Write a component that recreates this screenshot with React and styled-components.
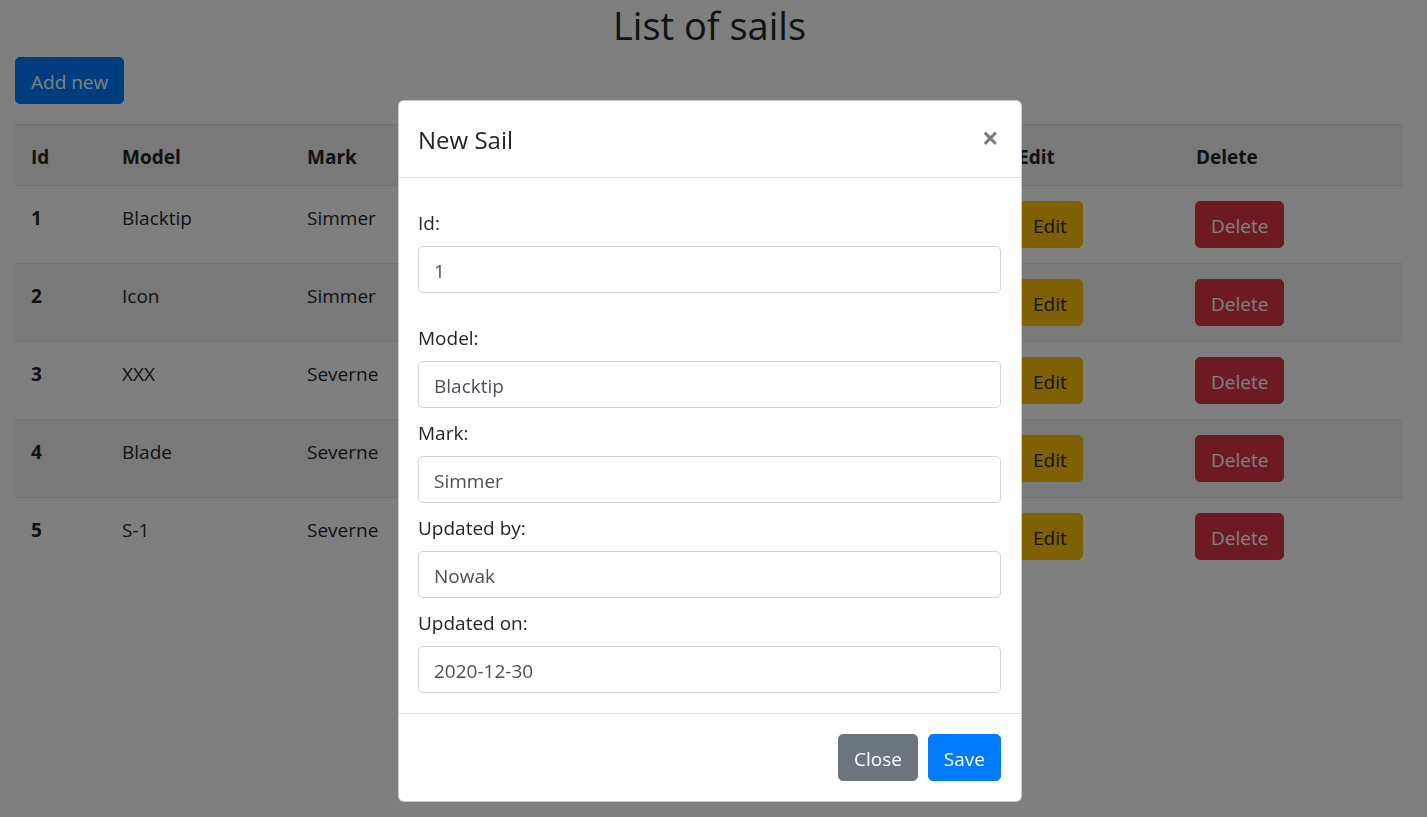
import React from 'react';
import styled, { createGlobalStyle, css } from 'styled-components';

const sails = [
  { id: 1, model: 'Blacktip', mark: 'Simmer', by: 'Nowak', on: '2020-12-30' },
  { id: 2, model: 'Icon', mark: 'Simmer', by: 'Nowak', on: '2020-12-30' },
  { id: 3, model: 'XXX', mark: 'Severne', by: 'Kowalski', on: '2020-12-29' },
  { id: 4, model: 'Blade', mark: 'Severne', by: 'Kowalski', on: '2020-12-28' },
  { id: 5, model: 'S-1', mark: 'Severne', by: 'Nowak', on: '2020-12-27' },
];

const columns = [
  { label: 'Id', width: 91 },
  { label: 'Model', width: 185 },
  { label: 'Mark', width: 237 },
  { label: 'Updated by', width: 237 },
  { label: 'Updated on', width: 237 },
  { label: 'Edit', width: 178 },
  { label: 'Delete', width: 222 },
];

const variants = {
  primary: { bg: '#007bff', fg: '#fff' },
  secondary: { bg: '#6c757d', fg: '#fff' },
  warning: { bg: '#ffc107', fg: '#212529' },
  danger: { bg: '#dc3545', fg: '#fff' },
};

const GlobalStyle = createGlobalStyle`
  html, body {
    margin: 0;
    padding: 0;
    background: #fff;
  }
  body {
    font-family: "Segoe UI", "Open Sans", "Noto Sans", sans-serif;
    font-size: 19px;
    line-height: 30px;
    color: #212529;
    overflow: hidden;
  }
  * {
    box-sizing: border-box;
  }
`;

const Page = styled.div`
  padding: 1px 25px 0 15px;
  min-height: 817px;
`;

const Title = styled.h2`
  margin: 0 0 8px 2px;
  font-size: 38px;
  font-weight: 400;
  line-height: 48px;
  text-align: center;
`;

const Button = styled.button`
  display: inline-block;
  font-family: inherit;
  font-size: 19px;
  line-height: 30px;
  font-weight: 400;
  padding: 8.5px 15px 6.5px;
  border: 1px solid ${props => variants[props.$variant].bg};
  border-radius: 5px;
  background: ${props => variants[props.$variant].bg};
  color: ${props => variants[props.$variant].fg};
  cursor: pointer;
  ${props => props.$spaced && css`
    margin: 5px;
  `}
`;

const Table = styled.table`
  width: 100%;
  margin-top: 20px;
  border-collapse: collapse;
  table-layout: fixed;
`;

const Row = styled.tr`
  background: ${props => (props.$striped ? 'rgba(0, 0, 0, 0.05)' : 'transparent')};
`;

const Th = styled.th`
  text-align: left;
  vertical-align: top;
  font-weight: 700;
  padding: 17px 15px 13px 16px;
  border-top: 1px solid #dee2e6;
`;

const Td = styled.td`
  vertical-align: top;
  padding: 15px 15px 15px 16px;
  border-top: 1px solid #dee2e6;
  font-weight: ${props => (props.$bold ? 700 : 400)};
  ${props => !props.$action && css`
    padding-top: 17px;
    padding-bottom: 13px;
  `}
  ${props => props.$action && css`
    padding-left: 15px;
  `}
`;

const Backdrop = styled.div`
  position: fixed;
  inset: 0;
  background: rgba(0, 0, 0, 0.5);
  display: flex;
  justify-content: center;
  align-items: flex-start;
  padding: 100px 7px 0 0;
`;

const Dialog = styled.div`
  width: 624px;
  background: #fff;
  border: 1px solid rgba(0, 0, 0, 0.2);
  border-radius: 6px;
  display: flex;
  flex-direction: column;
`;

const ModalHeader = styled.div`
  display: flex;
  align-items: flex-start;
  justify-content: space-between;
  padding: 20px 20px 19px 19px;
  border-bottom: 1px solid #dee2e6;
`;

const ModalTitle = styled.h5`
  margin: 0;
  font-size: 24px;
  font-weight: 400;
  line-height: 36px;
  padding-top: 1px;
`;

const CloseX = styled.button`
  font-family: "Segoe UI", "Open Sans", sans-serif;
  font-size: 30px;
  font-weight: 700;
  line-height: 1;
  color: #000;
  opacity: 0.5;
  background: transparent;
  border: 0;
  padding: 22px 22px 18px 20px;
  margin: -20px -20px -20px auto;
  cursor: pointer;
`;

const ModalBody = styled.div`
  padding: 20px 20px 20px 19px;
`;

const Field = styled.div`
  padding-bottom: ${props => (props.$grouped ? '20px' : '0')};
`;

const Label = styled.label`
  display: block;
  margin: 10px 0 8px;
  line-height: 30px;
`;

const Input = styled.input`
  display: block;
  width: 100%;
  height: 47px;
  padding: 8.5px 15px 6.5px;
  font-family: inherit;
  font-size: 19px;
  line-height: 30px;
  color: #495057;
  background: #fff;
  border: 1px solid #ced4da;
  border-radius: 5px;
  outline: none;
`;

const ModalFooter = styled.div`
  display: flex;
  justify-content: flex-end;
  align-items: center;
  padding: 15px;
  border-top: 1px solid #dee2e6;
`;

const fields = [
  { label: 'Id:', value: '1', grouped: true },
  { label: 'Model:', value: 'Blacktip' },
  { label: 'Mark:', value: 'Simmer' },
  { label: 'Updated by:', value: 'Nowak' },
  { label: 'Updated on:', value: '2020-12-30' },
];

export default function App() {
  return (
    <>
      <GlobalStyle />
      <Page>
        <Title>List of sails</Title>
        <Button $variant="primary">Add new</Button>
        <Table>
          <colgroup>
            {columns.map(col => (
              <col key={col.label} style={{ width: col.width }} />
            ))}
          </colgroup>
          <tbody>
            <Row $striped>
              {columns.map(col => (
                <Th key={col.label}>{col.label}</Th>
              ))}
            </Row>
            {sails.map((sail, index) => (
              <Row key={sail.id} $striped={index % 2 === 1}>
                <Td $bold>{sail.id}</Td>
                <Td>{sail.model}</Td>
                <Td>{sail.mark}</Td>
                <Td>{sail.by}</Td>
                <Td>{sail.on}</Td>
                <Td $action>
                  <Button $variant="warning">Edit</Button>
                </Td>
                <Td $action>
                  <Button $variant="danger">Delete</Button>
                </Td>
              </Row>
            ))}
          </tbody>
        </Table>
      </Page>

      <Backdrop>
        <Dialog role="dialog">
          <ModalHeader>
            <ModalTitle>New Sail</ModalTitle>
            <CloseX aria-label="Close">×</CloseX>
          </ModalHeader>
          <ModalBody>
            {fields.map(field => (
              <Field key={field.label} $grouped={field.grouped}>
                <Label>{field.label}</Label>
                <Input defaultValue={field.value} />
              </Field>
            ))}
          </ModalBody>
          <ModalFooter>
            <Button $variant="secondary" $spaced>Close</Button>
            <Button $variant="primary" $spaced>Save</Button>
          </ModalFooter>
        </Dialog>
      </Backdrop>
    </>
  );
}
